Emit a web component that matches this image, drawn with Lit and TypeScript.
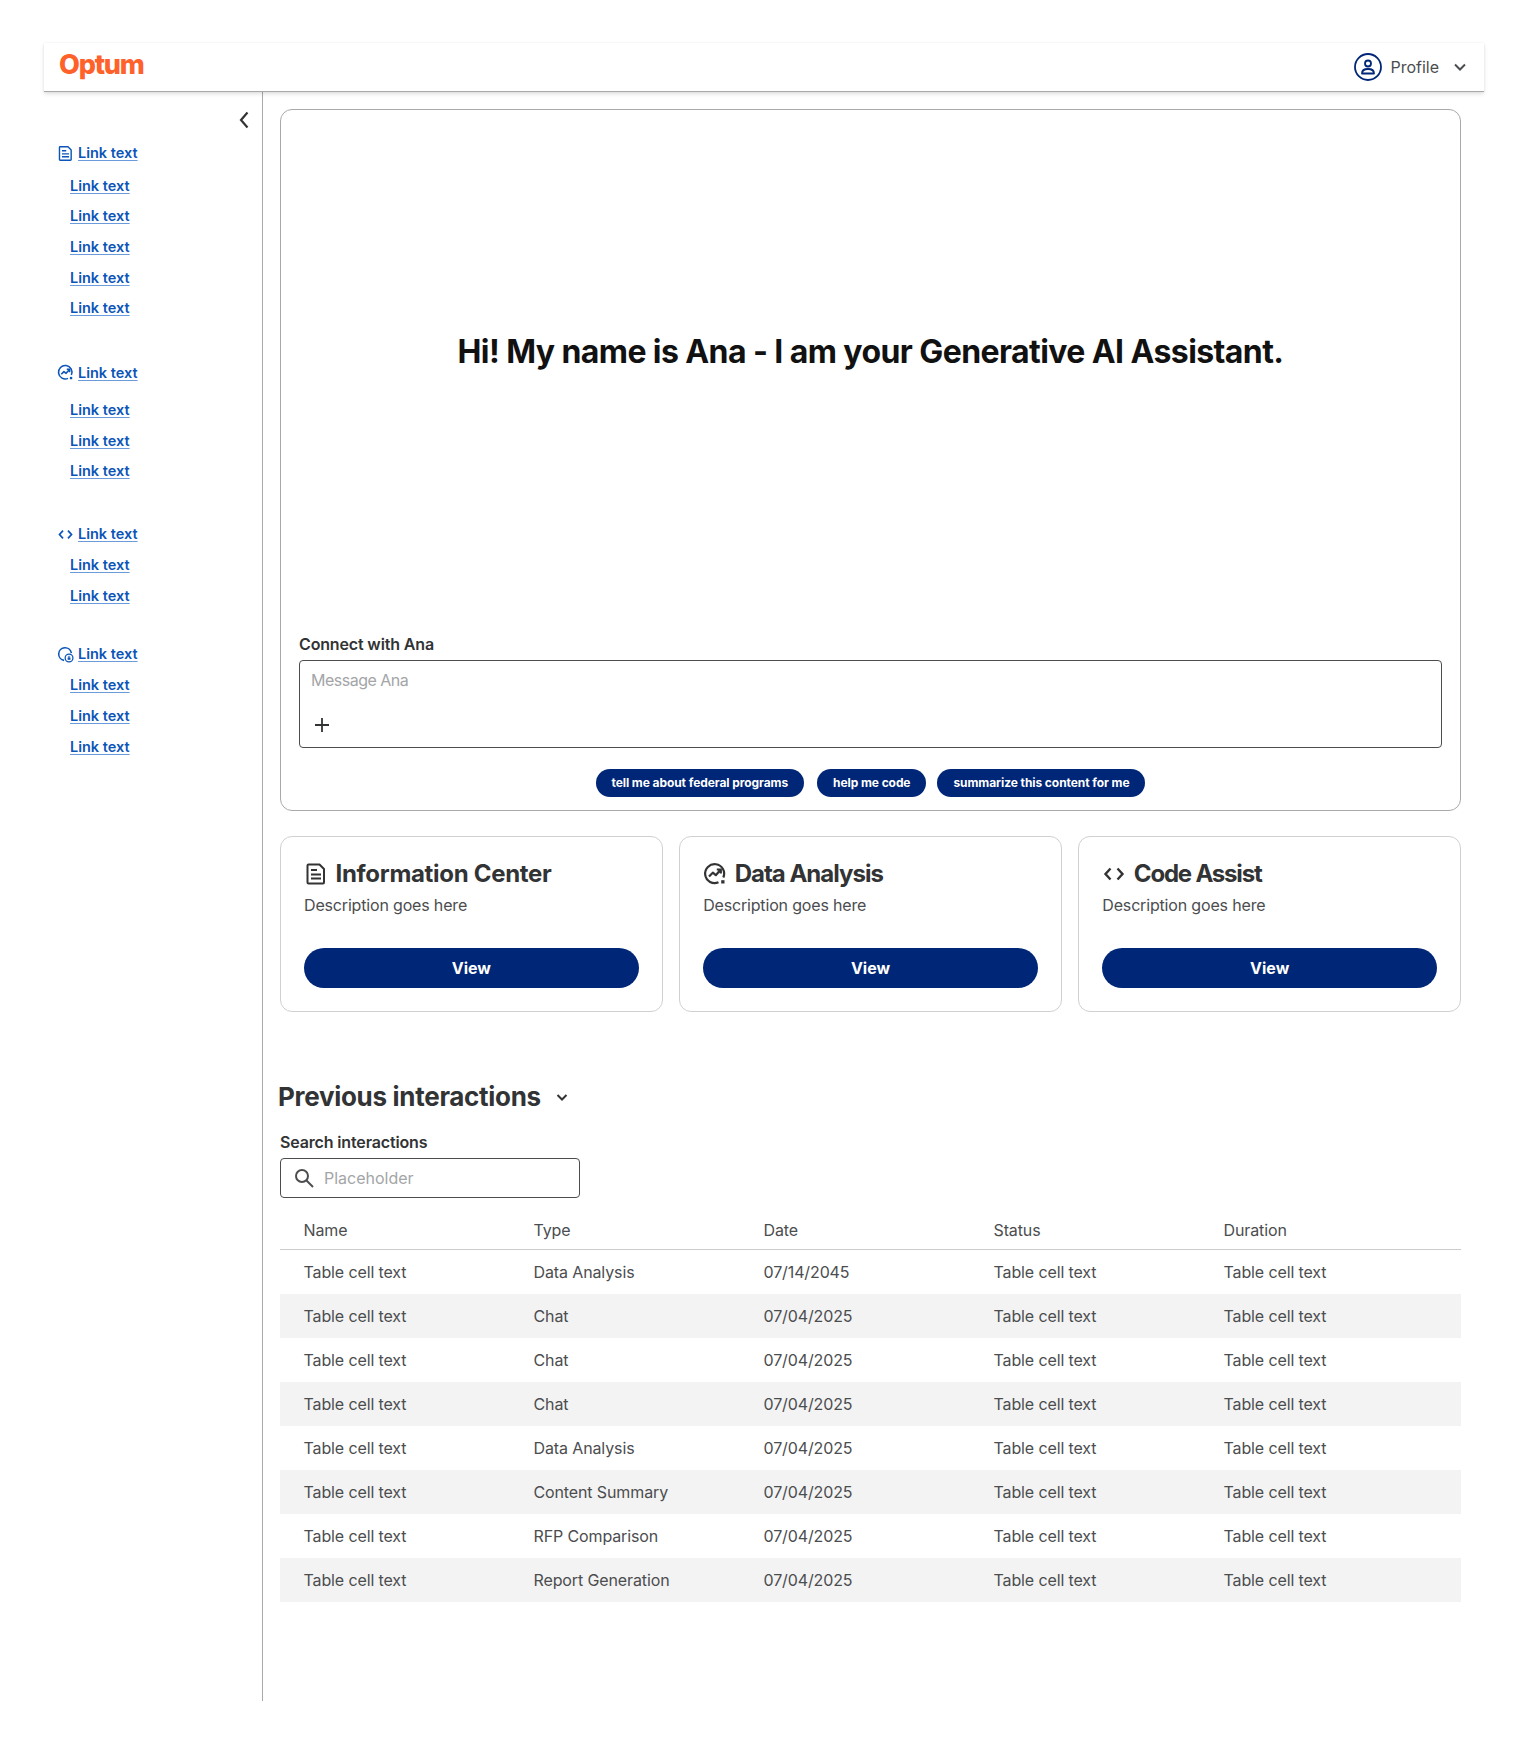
import { LitElement, html, css, svg } from "lit";
import { customElement } from "lit/decorators.js";

const docIcon = svg`<path d="M4.500 2.500h11L20 7v13.500a1 1 0 0 1-1 1H4.500a1 1 0 0 1-1-1v-17a1 1 0 0 1 1-1z" fill="none" stroke="currentColor" stroke-width="2" stroke-linejoin="round"/><path d="M7 8h6M7 12.500h10M7 16.500h10" fill="none" stroke="currentColor" stroke-width="2"/>`;
const chartIcon = svg`<path d="M20.300 15.500A9.500 9.500 0 1 0 15.500 20.300" fill="none" stroke="currentColor" stroke-width="2.200"/><rect x="18.200" y="18.200" width="3.300" height="3.300" fill="currentColor"/><path d="M6 14.500l3.800-3.800 3 2.500 4.500-5.200M13.800 7.500h4v4" fill="none" stroke="currentColor" stroke-width="2.200" stroke-linejoin="round"/>`;
const codeIcon = svg`<path d="M8.500 6.500L3.500 12l5 5.500M15.500 6.500l5 5.500-5 5.500" fill="none" stroke="currentColor" stroke-width="2.400"/>`;
const shieldIcon = svg`<path d="M10 20.300A9 9 0 1 1 20.300 10" fill="none" stroke="currentColor" stroke-width="2.200"/><circle cx="17" cy="17" r="5.500" fill="none" stroke="currentColor" stroke-width="1.800"/><rect x="15" y="16.500" width="4" height="3" fill="currentColor"/><circle cx="17" cy="15.500" r="1.200" fill="none" stroke="currentColor" stroke-width="1"/>`;

const groups = [
  { cls: "g1", icon: docIcon, subs: 5 },
  { cls: "g2", icon: chartIcon, subs: 3 },
  { cls: "g3", icon: codeIcon, subs: 2 },
  { cls: "g4", icon: shieldIcon, subs: 3 },
];

const cards = [
  { title: "Information Center", icon: docIcon, cls: "c1" },
  { title: "Data Analysis", icon: chartIcon, cls: "c2" },
  { title: "Code Assist", icon: codeIcon, cls: "c3" },
];

const rows = [
  ["Data Analysis", "07/14/2045"],
  ["Chat", "07/04/2025"],
  ["Chat", "07/04/2025"],
  ["Chat", "07/04/2025"],
  ["Data Analysis", "07/04/2025"],
  ["Content Summary", "07/04/2025"],
  ["RFP Comparison", "07/04/2025"],
  ["Report Generation", "07/04/2025"],
];

@customElement("app-root")
export class AppRoot extends LitElement {
  static styles = css`
    :host {
      display: block;
      width: 1528px;
      height: 1741px;
      background: #fff;
      font-family: Inter, "Noto Sans", sans-serif;
      color: #4b4d4f;
      box-sizing: border-box;
      padding: 43px 44px 0;
    }
    * { box-sizing: border-box; }
    svg { display: block; flex: none; }
    .topbar {
      height: 49px;
      display: flex;
      align-items: center;
      justify-content: space-between;
      padding: 0 17px 0 15px;
      background: #fff;
      border-bottom: 1px solid #a9a9a9;
      box-shadow: 0 2px 4px rgba(0,0,0,.12), 0 0 2px rgba(0,0,0,.06);
      position: relative;
    }
    .logo {
      font-size: 27px;
      font-weight: 800;
      color: #ff612b;
      letter-spacing: -1.2px;
      line-height: 30px;
      margin-top: -4px;
    }
    .profile {
      display: flex;
      align-items: center;
      font-size: 16px;
      color: #4b4d4f;
    }
    .avatar { color: #002677; margin-right: 8px; }
    .chev { margin-left: 14px; color: #4b4d4f; }
    .body { display: flex; height: 1609px; }
    .side {
      width: 219px;
      border-right: 1px solid #a9a9a9;
      padding: 19px 0 0 14px;
      display: flex;
      flex-direction: column;
      flex: none;
    }
    .collapse { align-self: flex-end; margin: 0 13px 0 0; color: #323334; }
    .group { display: flex; flex-direction: column; }
    .g1 { margin-top: 13px; }
    .g2 { margin-top: 34px; }
    .g3 { margin-top: 32px; }
    .g4 { margin-top: 28px; }
    .head {
      display: flex;
      align-items: center;
      gap: 4px;
      height: 22px;
      color: #0c55b8;
      margin-bottom: 9px;
    }
    .head svg { margin-left: -1px; }
    .g1 .head { margin-bottom: 10.500px; }
    .g2 .head { margin-bottom: 15px; }
    .link {
      font-size: 14.500px;
      font-weight: 600;
      line-height: 22px;
      color: #0c55b8;
      text-decoration: underline;
      text-underline-offset: 2px;
      text-decoration-color: #6c9bdc;
    }
    .sub { margin-left: 12px; height: 22px; margin-bottom: 8.700px; display: block; }
    .main { flex: 1; padding: 17px 0 0 17px; min-width: 0; margin-right: 23px; }
    .hero {
      height: 702px;
      border: 1px solid #a9a9a9;
      border-radius: 12px;
      display: flex;
      flex-direction: column;
      padding: 0 18px;
    }
    .hero h1 {
      margin: 0;
      font-size: 32px;
      line-height: 40px;
      font-weight: 700;
      color: #111;
      text-align: center;
      padding-top: 222px;
      height: 524px;
      letter-spacing: -0.58px;
    }
    .lbl { font-size: 16px; font-weight: 600; color: #323334; line-height: 20px; letter-spacing: -0.15px; }
    .hero .lbl { margin-bottom: 6px; }
    .box {
      height: 88px;
      border: 1px solid #4b4d4f;
      border-radius: 4px;
      padding: 9px 11px 13px;
      display: flex;
      flex-direction: column;
      justify-content: space-between;
      color: #323334;
    }
    .box svg { margin-left: 2px; }
    .ph { font-size: 16px; color: #a3a5a7; line-height: 20px; }
    .box .ph { letter-spacing: -0.5px; }
    .chips { display: flex; justify-content: center; gap: 12px; margin-top: 21px; }
    .chip {
      height: 28px;
      padding: 0 16px;
      border-radius: 14px;
      background: #002677;
      color: #fff;
      font-size: 12px;
      font-weight: 700;
      line-height: 28px;
      letter-spacing: -0.08px;
      white-space: nowrap;
    }
    .chip:nth-child(2) { margin: 0 -1px 0 1px; }
    .cards { display: grid; grid-template-columns: repeat(3, 1fr); gap: 16.500px; margin-top: 25px; }
    .card {
      height: 176px;
      border: 1px solid #d0d0d0;
      border-radius: 12px;
      padding: 22px 23px 0 23px;
      display: flex;
      flex-direction: column;
    }
    .ct {
      display: flex;
      align-items: center;
      gap: 7.500px;
      font-size: 24px;
      font-weight: 700;
      line-height: 30px;
      color: #323334;
      letter-spacing: -0.3px;
    }
    .ct svg { color: #323334; }
    .c2 .ct { letter-spacing: -1px; }
    .c3 .ct { letter-spacing: -1.2px; }
    .desc { font-size: 16px; line-height: 20px; margin-top: 6px; letter-spacing: -0.17px; }
    .btn {
      margin-top: 33px;
      height: 40px;
      border-radius: 20px;
      background: #002677;
      color: #fff;
      font-size: 16px;
      font-weight: 700;
      display: flex;
      align-items: center;
      justify-content: center;
    }
    .prev {
      display: flex;
      align-items: center;
      gap: 14px;
      margin: 67px 0 0 -2px;
      font-size: 26px;
      line-height: 36px;
      font-weight: 700;
      color: #323334;
      letter-spacing: -0.3px;
    }
    .search-lbl { margin-top: 17px; margin-bottom: 6px; }
    .search {
      width: 300px;
      height: 40px;
      border: 1px solid #4b4d4f;
      border-radius: 4px;
      display: flex;
      align-items: center;
      gap: 10px;
      padding-left: 13px;
      color: #4b4d4f;
    }
    .tbl { margin-top: 11px; }
    .row {
      display: grid;
      grid-template-columns: 230px 230px 230px 230px 1fr;
      padding-left: 23.500px;
      height: 44px;
      align-items: center;
      font-size: 16px;
      letter-spacing: -0.12px;
      color: #4b4d4f;
    }
    .row.hd { height: 41px; border-bottom: 1px solid #cbcccd; padding-top: 2px; }
    .row.alt { background: #f3f3f3; }
  `;

  private icon(s: unknown, size: number) {
    return html`<svg width=${size} height=${size} viewBox="0 0 24 24">${s}</svg>`;
  }

  render() {
    return html`
      <div class="topbar">
        <div class="logo">Optum</div>
        <div class="profile">
          <svg class="avatar" width="28" height="28" viewBox="0 0 28 28" fill="none" stroke="currentColor">
            <circle cx="14" cy="14" r="13" stroke-width="1.800"/>
            <circle cx="14" cy="10.500" r="3" stroke-width="1.800"/>
            <path d="M8 20.500c0-3 2.500-4.500 6-4.500s6 1.500 6 4.500z" stroke-width="1.800" stroke-linejoin="round"/>
          </svg>
          <span>Profile</span>
          <svg class="chev" width="14" height="14" viewBox="0 0 14 14" fill="none" stroke="currentColor" stroke-width="2"><path d="M2 4.500l5 5 5-5"/></svg>
        </div>
      </div>
      <div class="body">
        <aside class="side">
          <svg class="collapse" width="10" height="18" viewBox="0 0 10 18" fill="none" stroke="currentColor" stroke-width="2.200"><path d="M8.500 1.500L2 9l6.500 7.500"/></svg>
          ${groups.map(
            (g) => html`<div class="group ${g.cls}">
              <div class="head">${this.icon(g.icon, 17)}<span class="link">Link text</span></div>
              ${Array.from({ length: g.subs }, () => html`<a class="link sub">Link text</a>`)}
            </div>`
          )}
        </aside>
        <main class="main">
          <section class="hero">
            <h1>Hi! My name is Ana - I am your Generative AI Assistant.</h1>
            <div class="lbl">Connect with Ana</div>
            <div class="box">
              <div class="ph">Message Ana</div>
              <svg width="18" height="18" viewBox="0 0 18 18" fill="none" stroke="currentColor" stroke-width="1.800"><path d="M9 2v14M2 9h14"/></svg>
            </div>
            <div class="chips">
              <span class="chip">tell me about federal programs</span>
              <span class="chip">help me code</span>
              <span class="chip">summarize this content for me</span>
            </div>
          </section>
          <section class="cards">
            ${cards.map(
              (c) => html`<div class="card ${c.cls}">
                <div class="ct">${this.icon(c.icon, 24)}<span>${c.title}</span></div>
                <div class="desc">Description goes here</div>
                <div class="btn">View</div>
              </div>`
            )}
          </section>
          <div class="prev">
            <span>Previous interactions</span>
            <svg width="14" height="14" viewBox="0 0 14 14" fill="none" stroke="currentColor" stroke-width="2"><path d="M2.500 5l4.500 4.500L11.500 5"/></svg>
          </div>
          <div class="lbl search-lbl">Search interactions</div>
          <div class="search">
            <svg width="20" height="20" viewBox="0 0 20 20" fill="none" stroke="currentColor" stroke-width="2"><circle cx="8" cy="8" r="6"/><path d="M12.500 12.500L19 19"/></svg>
            <span class="ph">Placeholder</span>
          </div>
          <div class="tbl">
            <div class="row hd"><span>Name</span><span>Type</span><span>Date</span><span>Status</span><span>Duration</span></div>
            ${rows.map(
              (r, i) => html`<div class="row ${i % 2 ? "alt" : ""}">
                <span>Table cell text</span><span>${r[0]}</span><span>${r[1]}</span><span>Table cell text</span><span>Table cell text</span>
              </div>`
            )}
          </div>
        </main>
      </div>
    `;
  }
}
